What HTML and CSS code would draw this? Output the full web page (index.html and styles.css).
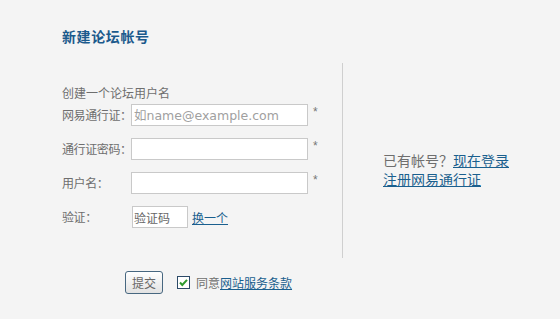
FILE: index.html
```html
<!DOCTYPE html>
<html lang="zh-CN">
<head>
<meta charset="utf-8">
<title>新建论坛帐号</title>
<link rel="stylesheet" href="styles.css">
</head>
<body>
<div class="page">
  <h1 class="title">新建论坛帐号</h1>
  <div class="main">
    <div class="left">
      <div class="intro">创建一个论坛用户名</div>
      <div class="form">
        <label class="lbl">网易通行证：</label>
        <input class="inp" type="text" placeholder="如name@example.com">
        <span class="req">*</span>

        <label class="lbl">通行证密码：</label>
        <input class="inp" type="password">
        <span class="req">*</span>

        <label class="lbl">用户名：</label>
        <input class="inp" type="text">
        <span class="req">*</span>

        <label class="lbl">验证：</label>
        <div class="captcha">
          <input class="inp code" type="text" value="验证码">
          <a class="link" href="#">换一个</a>
        </div>
        <span></span>
      </div>
    </div>
    <div class="right">
      <div>已有帐号？<a class="link" href="#">现在登录</a></div>
      <div><a class="link" href="#">注册网易通行证</a></div>
    </div>
  </div>
  <div class="bottom">
    <button class="btn" type="button">提交</button>
    <span class="check"><svg width="11" height="11" viewBox="0 0 11 11"><path d="M2 5.5 L4.3 8 L9 2.8" fill="none" stroke="#2e9a2e" stroke-width="2"/></svg></span>
    <span class="agree">同意<a class="link" href="#">网站服务条款</a></span>
  </div>
</div>
</body>
</html>
```

FILE: styles.css
```css
html, body {
  margin: 0;
  padding: 0;
  background: #f4f4f4;
}
body {
  font-family: "Noto Sans CJK SC", "DejaVu Sans", sans-serif;
  font-size: 12px;
  color: #6e6e6e;
}
.page {
  padding: 28px 0 0 62px;
}
.title {
  margin: 0;
  font-size: 14px;
  line-height: 16px;
  font-weight: bold;
  color: #1b5a8c;
  letter-spacing: 0.6px;
}
.main {
  display: flex;
  margin-top: 19px;
}
.left {
  box-sizing: border-box;
  width: 281px;
  height: 195px;
  border-right: 1px solid #cfcfcf;
  padding-top: 22px;
}
.intro {
  line-height: 16px;
  margin-bottom: 3px;
}
.form {
  display: grid;
  grid-template-columns: 69px 177px auto;
  grid-auto-rows: 22px;
  row-gap: 12px;
  align-items: center;
}
.lbl {
  line-height: 16px;
  white-space: nowrap;
  letter-spacing: -0.4px;
}
.inp {
  box-sizing: border-box;
  width: 177px;
  height: 22px;
  margin: 0;
  border: 1px solid #c9c9c9;
  background: #fff;
  padding: 0 2px;
  font-family: "DejaVu Sans", "Noto Sans CJK SC", sans-serif;
  font-size: 12.5px;
  color: #666;
  outline: none;
}
.inp::placeholder {
  color: #a0a0a0;
}
.req {
  align-self: start;
  padding-left: 5px;
  line-height: 16px;
  color: #777;
  font-family: "Liberation Sans", sans-serif;
  font-size: 12px;
}
.captcha {
  display: flex;
  align-items: center;
  gap: 4px;
  padding-left: 1px;
}
.inp.code {
  width: 56px;
  font-family: "Noto Sans CJK SC", sans-serif;
  font-size: 12px;
  padding: 0 1px;
}
.link {
  color: #1a5f8e;
  text-decoration: underline;
}
.right {
  padding: 88px 0 0 40px;
  font-size: 14px;
  line-height: 19px;
}
.bottom {
  display: flex;
  align-items: center;
  margin-top: 13px;
  padding-left: 63px;
}
.btn {
  box-sizing: border-box;
  width: 38px;
  height: 23px;
  margin: 0;
  padding: 0;
  border: 1px solid #476780;
  border-radius: 3px;
  background: linear-gradient(#ffffff, #e2e2e2);
  font-family: "Noto Sans CJK SC", sans-serif;
  font-size: 12px;
  color: #666;
}
.check {
  box-sizing: border-box;
  width: 13px;
  height: 13px;
  margin-left: 14px;
  border: 1px solid #2c4a68;
  background: #fff;
  display: flex;
  align-items: center;
  justify-content: center;
}
.agree {
  margin-left: 6px;
  font-size: 12px;
}
```
